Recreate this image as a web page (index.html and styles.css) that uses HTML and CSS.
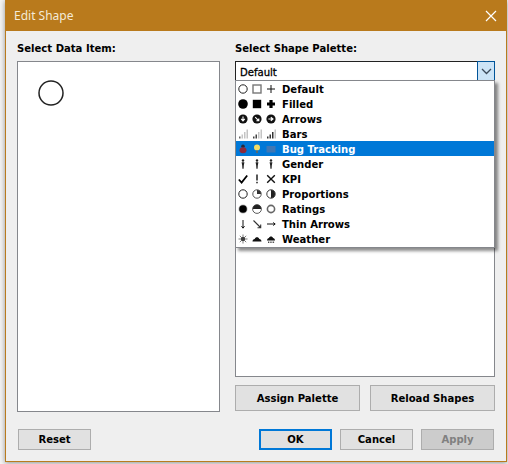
FILE: index.html
```html
<!DOCTYPE html>
<html lang="en">
<head>
    <meta charset="UTF-8">
    <title>Edit Shape</title>
    <link rel="stylesheet" href="styles.css">
</head>
<body>
    <svg class="defs" width="0" height="0">
        <symbol id="s-ring" viewBox="0 0 10 10"><circle cx="5" cy="5" r="4.2" fill="#fff" stroke="#222" stroke-width="1"/></symbol>
        <symbol id="s-square" viewBox="0 0 10 10"><rect x="1" y="1" width="8" height="8" fill="#fff" stroke="#777" stroke-width="1.4"/></symbol>
        <symbol id="s-plus" viewBox="0 0 10 10"><path d="M5 1v8M1 5h8" stroke="#111" stroke-width="1"/></symbol>
        <symbol id="s-disc" viewBox="0 0 10 10"><circle cx="5" cy="5" r="4.8" fill="#000"/></symbol>
        <symbol id="s-block" viewBox="0 0 10 10"><rect x=".8" y=".8" width="8.4" height="8.4" fill="#000"/></symbol>
        <symbol id="s-cross" viewBox="0 0 10 10"><path d="M5 1v8M1 5h8" stroke="#000" stroke-width="3.2"/></symbol>
        <symbol id="s-down" viewBox="0 0 10 10"><circle cx="5" cy="5" r="4.6" fill="#111"/><path d="M5 2.4v4M3.2 4.8 5 7l1.8-2.2" stroke="#fff" stroke-width="1.1" fill="none"/></symbol>
        <symbol id="s-diag" viewBox="0 0 10 10"><circle cx="5" cy="5" r="4.6" fill="#111"/><path d="M3.2 3.2l3.6 3.600M6.800 4.400v2.400H4.400" stroke="#fff" stroke-width="1.100" fill="none"/></symbol>
        <symbol id="s-right" viewBox="0 0 10 10"><circle cx="5" cy="5" r="4.6" fill="#111"/><path d="M2.4 5h4M4.8 3.2 7 5 4.8 6.8" stroke="#fff" stroke-width="1.1" fill="none"/></symbol>
        <symbol id="s-bar1" viewBox="0 0 10 10"><path d="M3.500 5.500H5v4H3.500zM6 3h1.500v6.500H6zM8.500 .5H10v9H8.500z" fill="#c4c4c4"/><path d="M1 7.500h1.500v2H1z" fill="#666"/></symbol>
        <symbol id="s-bar2" viewBox="0 0 10 10"><path d="M6 3h1.500v6.500H6zM8.500 .5H10v9H8.500z" fill="#c4c4c4"/><path d="M1 7.500h1.500v2H1zM3.500 5.500H5v4H3.500z" fill="#444"/></symbol>
        <symbol id="s-bar3" viewBox="0 0 10 10"><path d="M8.500 .5H10v9H8.500z" fill="#c4c4c4"/><path d="M1 7.500h1.500v2H1zM3.500 5.500H5v4H3.500zM6 3h1.500v6.500H6z" fill="#333"/></symbol>
        <symbol id="s-bug" viewBox="0 0 10 10"><circle cx="5" cy="2.200" r="1.800" fill="#2a2a3a"/><ellipse cx="5" cy="6.200" rx="3.500" ry="3" fill="#8e2a3c"/></symbol>
        <symbol id="s-bulb" viewBox="0 0 10 10"><circle cx="5" cy="3.500" r="3" fill="#f2dd66"/><rect x="4" y="6.500" width="2" height="2.500" fill="#5a6a70"/></symbol>
        <symbol id="s-mail" viewBox="0 0 10 10"><rect x=".5" y="2" width="9" height="6.500" fill="#3f77b4"/></symbol>
        <symbol id="s-person" viewBox="0 0 10 10"><circle cx="5" cy="1.500" r="1.200" fill="#222"/><path d="M3.600 3.200h2.800L5.800 6.500l-.2 3.300H4.400L4.200 6.500z" fill="#222"/></symbol>
        <symbol id="s-check" viewBox="0 0 10 10"><path d="M.8 5.500 3.600 8.500 9.200 1.500" stroke="#000" stroke-width="1.800" fill="none"/></symbol>
        <symbol id="s-bang" viewBox="0 0 10 10"><path d="M5 .5v6" stroke="#111" stroke-width="1.400"/><rect x="4.300" y="7.800" width="1.400" height="1.500" fill="#111"/></symbol>
        <symbol id="s-x" viewBox="0 0 10 10"><path d="M1.200 1.200l7.600 7.600M8.800 1.200 1.200 8.800" stroke="#111" stroke-width="1.400"/></symbol>
        <symbol id="s-quarter" viewBox="0 0 10 10"><circle cx="5" cy="5" r="4.200" fill="#fff" stroke="#444" stroke-width=".9"/><path d="M5 5V1a4 4 0 0 1 4 4z" fill="#333"/></symbol>
        <symbol id="s-half" viewBox="0 0 10 10"><circle cx="5" cy="5" r="4.200" fill="#fff" stroke="#222" stroke-width=".9"/><path d="M5 1a4 4 0 0 1 0 8z" fill="#222"/></symbol>
        <symbol id="s-dot" viewBox="0 0 10 10"><circle cx="5" cy="5" r="4.600" fill="#bbb"/><circle cx="5" cy="5" r="3.800" fill="#000"/></symbol>
        <symbol id="s-tophalf" viewBox="0 0 10 10"><circle cx="5" cy="5" r="4.400" fill="#fff" stroke="#333" stroke-width=".8"/><path d="M.8 5a4.200 4.200 0 0 1 8.400 0z" fill="#222"/></symbol>
        <symbol id="s-thick" viewBox="0 0 10 10"><circle cx="5" cy="5" r="3.600" fill="#fff" stroke="#666" stroke-width="1.600"/></symbol>
        <symbol id="s-tdown" viewBox="0 0 10 10"><path d="M5 1v8M3.500 7.200 5 9.200 6.500 7.200" stroke="#111" fill="none"/></symbol>
        <symbol id="s-tdiag" viewBox="0 0 10 10"><path d="M1.500 1.500 8.500 8.500M8.700 5.500v3.200H5.500" stroke="#333" stroke-width="1.100" fill="none"/></symbol>
        <symbol id="s-tright" viewBox="0 0 10 10"><path d="M1 5h8M7.200 3.500 9.200 5 7.200 6.500" stroke="#111" fill="none"/></symbol>
        <symbol id="s-sun" viewBox="0 0 10 10"><circle cx="5" cy="5" r="2" fill="#222"/><path d="M5 .5v9M.5 5h9M1.800 1.800l6.400 6.400M8.200 1.800 1.800 8.200" stroke="#444" stroke-width=".7"/></symbol>
        <symbol id="s-cloud" viewBox="0 0 10 10"><path d="M.5 7.500C.5 6 1.500 5 2.700 5 3.200 2.500 6.800 2.500 7.300 5c1.200 0 2.200 1 2.200 2.500z" fill="#111"/></symbol>
        <symbol id="s-rain" viewBox="0 0 10 10"><path d="M1 6.500C1 5 2 4 3 4 3.400 2 6.600 2 7 4c1 0 2 1 2 2.500z" fill="#111"/><path d="M2.500 7.500v1.500M4.200 7.500v1.500M5.900 7.500v1.500M7.600 7.500v1.500" stroke="#444"/></symbol>
    </svg>

    <div class="dialog">
        <div class="titlebar">
            <span>Edit Shape</span>
            <svg class="close" width="12" height="12" viewBox="0 0 12 12"><path d="M1 1l10 10M11 1 1 11" stroke="#fff" stroke-width="1.2"/></svg>
        </div>
        <div class="content">
            <div class="panels">
                <div class="panel">
                    <div class="label">Select Data Item:</div>
                    <div class="item-box">
                        <svg class="item-circle" width="28" height="28" viewBox="0 0 28 28"><circle cx="14" cy="14" r="12" fill="#fff" stroke="#222" stroke-width="1.5"/></svg>
                    </div>
                </div>
                <div class="panel">
                    <div class="label">Select Shape Palette:</div>
                    <div class="combo-wrap">
                        <div class="combo">
                            <span class="combo-text">Default</span>
                            <span class="combo-btn">
                                <svg width="11" height="7" viewBox="0 0 11 7"><path d="M1 1l4.500 4.500L10 1" stroke="#3b4a5a" stroke-width="1.3" fill="none"/></svg>
                            </span>
                        </div>
                        <ul class="drop">
                            <li><span class="ico"><svg><use href="#s-ring"/></svg><svg><use href="#s-square"/></svg><svg><use href="#s-plus"/></svg></span>Default</li>
                            <li><span class="ico"><svg><use href="#s-disc"/></svg><svg><use href="#s-block"/></svg><svg><use href="#s-cross"/></svg></span>Filled</li>
                            <li><span class="ico"><svg><use href="#s-down"/></svg><svg><use href="#s-diag"/></svg><svg><use href="#s-right"/></svg></span>Arrows</li>
                            <li><span class="ico"><svg><use href="#s-bar1"/></svg><svg><use href="#s-bar2"/></svg><svg><use href="#s-bar3"/></svg></span>Bars</li>
                            <li class="selected"><span class="ico"><svg><use href="#s-bug"/></svg><svg><use href="#s-bulb"/></svg><svg><use href="#s-mail"/></svg></span>Bug Tracking</li>
                            <li><span class="ico"><svg><use href="#s-person"/></svg><svg><use href="#s-person"/></svg><svg><use href="#s-person"/></svg></span>Gender</li>
                            <li><span class="ico"><svg><use href="#s-check"/></svg><svg><use href="#s-bang"/></svg><svg><use href="#s-x"/></svg></span>KPI</li>
                            <li><span class="ico"><svg><use href="#s-ring"/></svg><svg><use href="#s-quarter"/></svg><svg><use href="#s-half"/></svg></span>Proportions</li>
                            <li><span class="ico"><svg><use href="#s-dot"/></svg><svg><use href="#s-tophalf"/></svg><svg><use href="#s-thick"/></svg></span>Ratings</li>
                            <li><span class="ico"><svg><use href="#s-tdown"/></svg><svg><use href="#s-tdiag"/></svg><svg><use href="#s-tright"/></svg></span>Thin Arrows</li>
                            <li><span class="ico"><svg><use href="#s-sun"/></svg><svg><use href="#s-cloud"/></svg><svg><use href="#s-rain"/></svg></span>Weather</li>
                        </ul>
                    </div>
                    <div class="shape-box"></div>
                    <div class="palette-btns">
                        <button class="btn">Assign Palette</button>
                        <button class="btn">Reload Shapes</button>
                    </div>
                </div>
            </div>
            <div class="footer">
                <button class="btn small">Reset</button>
                <div class="footer-right">
                    <button class="btn small ok">OK</button>
                    <button class="btn small">Cancel</button>
                    <button class="btn small disabled">Apply</button>
                </div>
            </div>
        </div>
    </div>
</body>
</html>
```

FILE: styles.css
```css
html, body {
    margin: 0;
    height: 100%;
}

body {
    background-color: #f3f3f3;
    font-family: "DejaVu Sans Condensed", "DejaVu Sans", sans-serif;
    font-stretch: condensed;
    font-size: 11.2px;
    font-weight: bold;
    color: #000;
    overflow: hidden;
}

.defs {
    display: block;
    height: 0;
}

.dialog {
    width: 502px;
    height: 462px;
    margin-left: 5px;
    box-sizing: border-box;
    background-color: #efefef;
    border: 1px solid #b97b1e;
    border-top: 0;
    box-shadow: 0 1px 5px rgba(0, 0, 0, 0.4);
}

.titlebar {
    height: 31px;
    background-color: #b97a1c;
    color: #f4ead8;
    font-family: "Noto Sans", sans-serif;
    font-stretch: normal;
    font-size: 12px;
    font-weight: normal;
    display: flex;
    align-items: center;
    justify-content: space-between;
    padding: 0 9px 0 8px;
}

.content {
    padding: 11px 11px 0 11px;
}

.panels {
    display: flex;
    gap: 15px;
}

.panel {
    display: flex;
    flex-direction: column;
}

.panel:first-child {
    width: 203px;
}

.panel:last-child {
    width: 260px;
}

.label {
    height: 19px;
    line-height: 13px;
}

.item-box {
    width: 201px;
    height: 349px;
    background-color: #fff;
    border: 1px solid #85878c;
}

.item-circle {
    display: block;
    margin: 17px 0 0 19px;
}

.combo-wrap {
    position: relative;
}

.combo {
    height: 18px;
    background-color: #fff;
    border: 1px solid #222;
    display: flex;
    align-items: center;
    justify-content: space-between;
}

.combo-text {
    padding: 2px 0 0 4px;
    font-weight: normal;
    -webkit-text-stroke: 0.3px #000;
}

.combo-btn {
    width: 16px;
    height: 18px;
    margin: -2px -1px -2px 0;
    background-color: #cce4f7;
    border: 1px solid #005499;
    display: flex;
    align-items: center;
    justify-content: center;
}

.drop {
    position: absolute;
    top: 19px;
    left: 0;
    width: 258px;
    margin: 0;
    padding: 0 0 1px 0;
    list-style: none;
    background-color: #fff;
    border: 1px solid #85878c;
    box-shadow: 3px 3px 3px rgba(0, 0, 0, 0.45);
    z-index: 2;
}

.drop li {
    height: 14px;
    padding-top: 1px;
    display: flex;
    align-items: center;
}

.drop li.selected {
    background-color: #0078d7;
    color: #fff;
}

.ico {
    display: flex;
    width: 44px;
    margin-top: -1px;
    padding-left: 2px;
    gap: 4px;
}

.ico svg {
    width: 10px;
    height: 10px;
    display: block;
}

.shape-box {
    height: 295px;
    background-color: #fff;
    border: 1px solid #85878c;
    border-top: 0;
}

.palette-btns {
    display: flex;
    justify-content: space-between;
    margin-top: 8px;
}

.btn {
    width: 125px;
    height: 26px;
    padding: 0;
    background-color: #e1e1e1;
    border: 1px solid #adadad;
    font-family: inherit;
    font-stretch: inherit;
    font-size: inherit;
    font-weight: bold;
    color: #000;
}

.btn.small {
    width: 73px;
    height: 21px;
}

.btn.ok {
    border: 2px solid #0078d7;
}

.btn.disabled {
    background-color: #ccc;
    color: #808080;
}

.footer {
    display: flex;
    justify-content: space-between;
    margin: 17px 1px 0 1px;
}

.footer-right {
    display: flex;
    gap: 8px;
}
```
